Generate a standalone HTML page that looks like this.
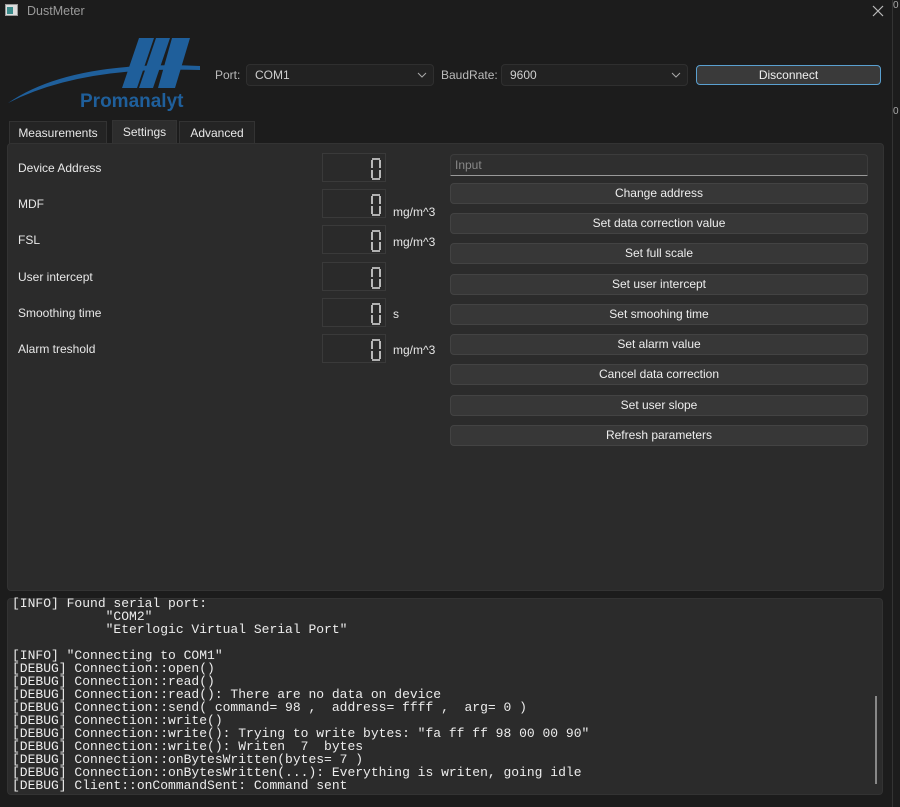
<!DOCTYPE html>
<html><head><meta charset="utf-8"><style>
*{margin:0;padding:0;box-sizing:border-box}
body{width:900px;height:807px;background:#1c1c1c;font-family:"Liberation Sans",sans-serif;font-size:12px;color:#e6e6e6;position:relative;overflow:hidden}
.a{position:absolute}
.lbl{position:absolute;font-size:12px;color:#e8e8e8}
.combo{position:absolute;height:22px;background:#222;border:1px solid #2f2f2f;border-radius:4px;padding-left:8px;line-height:20px;color:#cfcfcf}
.combo svg{position:absolute;right:6px;top:7px}
.btn{position:absolute;left:450px;width:418px;height:21px;background:#373737;border:1px solid #434343;border-radius:4px;text-align:center;line-height:19px;color:#eee}
.lcd{position:absolute;left:322px;width:64px;height:29px;border:1px solid #3a3a3a;background:#2a2a2a}
.lcd svg{position:absolute;right:3px;top:4px}
.unit{position:absolute;left:393px}
.tab{position:absolute;top:121px;height:23px;background:#242424;border:1px solid #333;border-bottom:none;text-align:center;line-height:22px;color:#e8e8e8;font-size:12px}
pre{font-family:"Liberation Mono",monospace;font-size:13px;line-height:13px;color:#ececec;position:absolute;left:12px;top:597px}
</style></head><body>
<div class="a" style="left:5px;top:4px;width:13px;height:12px;background:#ddd;border:1px solid #999"><div style="position:absolute;left:1px;top:2px;width:6px;height:7px;background:#3a8a8a"></div></div>
<div class="lbl" style="left:27px;top:4px;color:#9a9a9a;font-size:12.5px">DustMeter</div>
<svg class="a" style="left:871px;top:4px" width="14" height="14"><path d="M2 2L12 12M12 2L2 12" stroke="#bbb" stroke-width="1.2"/></svg>
<div class="a" style="left:892px;top:0;width:1px;height:807px;background:#333"></div>
<div class="lbl" style="left:893px;top:0;color:#aaa;font-size:10px">0</div>
<div class="lbl" style="left:893px;top:106px;color:#aaa;font-size:10px">0</div>
<svg class="a" style="left:0;top:30px" width="200" height="85">
<path d="M8 73 Q70 30 200 36 L200 40 Q80 36 8 73Z" fill="#1f5f9b"/>
<path d="M139 8 L154 8 L137 58 L122 58Z" fill="#1f5f9b"/>
<path d="M156 8 L170 8 L153 58 L139 58Z" fill="#1f5f9b"/>
<path d="M172 8 L190 8 L175 58 L158 58Z" fill="#1f5f9b"/>
<text x="80" y="77" font-family="Liberation Sans" font-weight="bold" font-size="19" fill="#1f5f9b">Promanalyt</text>
</svg>
<div class="lbl" style="left:215px;top:68px;color:#bbb">Port:</div>
<div class="combo" style="left:246px;top:64px;width:188px">COM1<svg width="10" height="7"><path d="M1 1L5 5L9 1" stroke="#aaa" fill="none"/></svg></div>
<div class="lbl" style="left:441px;top:68px;color:#bbb">BaudRate:</div>
<div class="combo" style="left:501px;top:64px;width:187px">9600<svg width="10" height="7"><path d="M1 1L5 5L9 1" stroke="#aaa" fill="none"/></svg></div>
<div class="a" style="left:696px;top:65px;width:185px;height:20px;background:#3a3a3a;border:1px solid #5aa0d0;border-radius:4px;text-align:center;line-height:18px;color:#f0f0f0">Disconnect</div>
<div class="tab" style="left:9px;width:98px">Measurements</div>
<div class="tab" style="left:112px;width:65px;background:#2d2d2d;top:120px">Settings</div>
<div class="tab" style="left:179px;width:76px">Advanced</div>
<div class="a" style="left:7px;top:143px;width:877px;height:448px;background:#2b2b2b;border:1px solid #333;border-radius:4px"></div>
<div class="lbl" style="left:18px;top:161px">Device Address</div>
<div class="lbl" style="left:18px;top:197px">MDF</div>
<div class="lbl" style="left:18px;top:233px">FSL</div>
<div class="lbl" style="left:18px;top:270px">User intercept</div>
<div class="lbl" style="left:18px;top:306px">Smoothing time</div>
<div class="lbl" style="left:18px;top:342px">Alarm treshold</div>
<div class="lcd" style="top:153px"><svg width="12" height="22"><path d="M2 1H10M2 2V10M10 2V10M2 12V20M10 12V20M2 21H10" stroke="#ddd" fill="none" stroke-width="1.6"/></svg></div>
<div class="lcd" style="top:189px"><svg width="12" height="22"><path d="M2 1H10M2 2V10M10 2V10M2 12V20M10 12V20M2 21H10" stroke="#ddd" fill="none" stroke-width="1.6"/></svg></div>
<div class="lcd" style="top:225px"><svg width="12" height="22"><path d="M2 1H10M2 2V10M10 2V10M2 12V20M10 12V20M2 21H10" stroke="#ddd" fill="none" stroke-width="1.6"/></svg></div>
<div class="lcd" style="top:262px"><svg width="12" height="22"><path d="M2 1H10M2 2V10M10 2V10M2 12V20M10 12V20M2 21H10" stroke="#ddd" fill="none" stroke-width="1.6"/></svg></div>
<div class="lcd" style="top:298px"><svg width="12" height="22"><path d="M2 1H10M2 2V10M10 2V10M2 12V20M10 12V20M2 21H10" stroke="#ddd" fill="none" stroke-width="1.6"/></svg></div>
<div class="lcd" style="top:334px"><svg width="12" height="22"><path d="M2 1H10M2 2V10M10 2V10M2 12V20M10 12V20M2 21H10" stroke="#ddd" fill="none" stroke-width="1.6"/></svg></div>
<div class="unit" style="top:205px">mg/m^3</div>
<div class="unit" style="top:235px">mg/m^3</div>
<div class="unit" style="top:307px">s</div>
<div class="unit" style="top:343px">mg/m^3</div>
<div class="a" style="left:450px;top:154px;width:418px;height:22px;background:#2f2f2f;border:1px solid #3c3c3c;border-bottom:1px solid #999;border-radius:4px 4px 0 0;padding-left:4px;line-height:20px;color:#888">Input</div>
<div class="btn" style="top:183px">Change address</div>
<div class="btn" style="top:213px">Set data correction value</div>
<div class="btn" style="top:243px">Set full scale</div>
<div class="btn" style="top:274px">Set user intercept</div>
<div class="btn" style="top:304px">Set smoohing time</div>
<div class="btn" style="top:334px">Set alarm value</div>
<div class="btn" style="top:364px">Cancel data correction</div>
<div class="btn" style="top:395px">Set user slope</div>
<div class="btn" style="top:425px">Refresh parameters</div>
<div class="a" style="left:7px;top:598px;width:876px;height:197px;background:#2b2b2b;border:1px solid #333;border-radius:4px;overflow:hidden"></div>
<div class="a" style="left:875px;top:696px;width:2px;height:88px;background:#888"></div>
<pre>[INFO] Found serial port:
            "COM2"
            "Eterlogic Virtual Serial Port"

[INFO] "Connecting to COM1"
[DEBUG] Connection::open()
[DEBUG] Connection::read()
[DEBUG] Connection::read(): There are no data on device
[DEBUG] Connection::send( command= 98 ,  address= ffff ,  arg= 0 )
[DEBUG] Connection::write()
[DEBUG] Connection::write(): Trying to write bytes: "fa ff ff 98 00 00 90"
[DEBUG] Connection::write(): Writen  7  bytes
[DEBUG] Connection::onBytesWritten(bytes= 7 )
[DEBUG] Connection::onBytesWritten(...): Everything is writen, going idle
[DEBUG] Client::onCommandSent: Command sent</pre>
</body></html>
